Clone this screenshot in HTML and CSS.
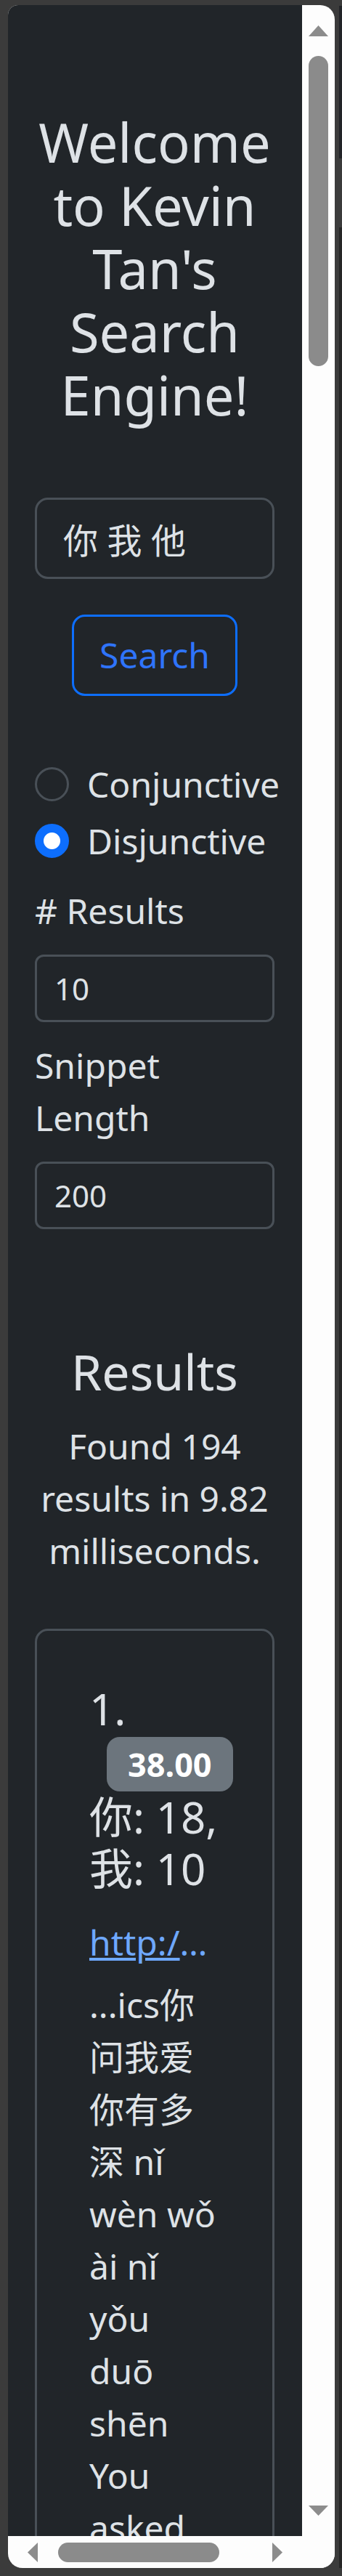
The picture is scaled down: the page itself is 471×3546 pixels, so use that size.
FILE: index.html
```html
<!DOCTYPE html>
<html lang="en">
<head>
<meta charset="utf-8">
<title>Kevin Tan's Search Engine</title>
<link rel="stylesheet" href="styles.css">
</head>
<body>
<div class="frame">
  <div class="viewport">
    <main class="container">
      <h1 class="title">Welcome to Kevin Tan's Search Engine!</h1>
      <form class="search-form">
        <input class="query" type="text" value="你 我 他">
        <button class="btn-search" type="button">Search</button>
        <div class="form-check first">
          <input class="radio" type="radio" name="mode" id="conj">
          <label for="conj">Conjunctive</label>
        </div>
        <div class="form-check">
          <input class="radio" type="radio" name="mode" id="disj" checked>
          <label for="disj">Disjunctive</label>
        </div>
        <label class="field-label first-field" for="num">#&nbsp;Results</label>
        <input class="small-input" id="num" type="text" value="10">
        <label class="field-label" for="len">Snippet Length</label>
        <input class="small-input" id="len" type="text" value="200">
      </form>
      <section class="results">
        <h2 class="results-title">Results</h2>
        <p class="found">Found 194 results in 9.82 milliseconds.</p>
        <div class="card">
          <div class="card-body">
            <h5 class="result-head">1. <span class="badge">38.00</span> 你: 18, 我: 10</h5>
            <a class="url" href="#">http://www.lyricstranslate.com/en/ni-wen-wo-ai-ni-you-duo-shen</a>
            <p class="snippet">...ics你问我爱你有多深 nǐ wèn wǒ ài nǐ yǒu duō shēn You asked me how deep my love for you is, how much I really love you</p>
          </div>
        </div>
      </section>
    </main>
  </div>
  <div class="vscroll">
    <svg class="arrow" width="27" height="15" viewBox="0 0 27 15"><path d="M13.5 0L27 15H0Z" fill="#8c8c8c"/></svg>
    <div class="vthumb"></div>
    <svg class="arrow down" width="27" height="14" viewBox="0 0 27 14"><path d="M0 0H27L13.5 14Z" fill="#8c8c8c"/></svg>
  </div>
  <div class="hscroll">
    <svg class="arrow" width="14" height="27" viewBox="0 0 14 27"><path d="M0 13.5L14 0V27Z" fill="#8c8c8c"/></svg>
    <div class="hthumb"></div>
    <svg class="arrow right" width="14" height="27" viewBox="0 0 14 27"><path d="M0 0L14 13.5L0 27Z" fill="#8c8c8c"/></svg>
  </div>
  <div class="corner"></div>
</div>
<div class="edge">
  <div class="seg-a"></div>
  <div class="seg-b"></div>
  <div class="seg-c"></div>
</div>
</body>
</html>
```

FILE: styles.css
```css
* { box-sizing: border-box; }

html, body { margin: 0; }

body {
  background: #3b3b3b;
  display: flex;
  align-items: flex-start;
  padding: 7px 0 0 11px;
  height: 3546px;
  overflow: hidden;
  font-family: "Noto Sans", "Noto Sans CJK SC", sans-serif;
}

.frame {
  width: 450px;
  height: 3528px;
  display: grid;
  grid-template-columns: 405px 45px;
  grid-template-rows: 3484px 44px;
  background: #fdfdfd;
  border-radius: 14px 20px 20px 20px;
  overflow: hidden;
  flex: none;
}

.viewport {
  background: #212529;
  color: #dee2e6;
  overflow: hidden;
  padding: 145px 38px 0 37px;
  font-size: 48px;
  line-height: 72px;
}

.title {
  margin: 0;
  font-size: 74px;
  line-height: 87px;
  font-weight: 400;
  text-align: center;
}

.search-form {
  display: flex;
  flex-direction: column;
  margin-top: 98px;
}

.query {
  width: 100%;
  height: 112px;
  padding: 0 36px;
  border: 3px solid #495057;
  border-radius: 18px;
  background: #212529;
  color: #dee2e6;
  font: 48px/72px "Noto Sans", "Noto Sans CJK SC", sans-serif;
  outline: none;
}

.btn-search {
  align-self: center;
  margin-top: 49px;
  height: 112px;
  padding: 0 35px;
  border: 3px solid #0d6efd;
  border-radius: 18px;
  background: transparent;
  color: #2f74fb;
  font: 48px/72px "Noto Sans", sans-serif;
}

.form-check {
  display: flex;
  align-items: flex-start;
  height: 72px;
  margin-bottom: 6px;
}

.form-check.first { margin-top: 86px; }

.radio {
  appearance: none;
  -webkit-appearance: none;
  flex: none;
  width: 47px;
  height: 47px;
  margin: 12px 25px 0 0;
  border: 3px solid #495057;
  border-radius: 50%;
  background: #212529;
}

.radio:checked {
  border-color: #0d6efd;
  background: radial-gradient(circle, #ffffff 0 11px, #0d6efd 12px);
}

.field-label {
  display: block;
  margin: 24px 0 24px;
}

.field-label.first-field { margin-top: 18px; }

.small-input {
  width: 100%;
  height: 93px;
  padding: 0 24px;
  border: 3px solid #495057;
  border-radius: 12px;
  background: #212529;
  color: #dee2e6;
  font: 42px/63px "Noto Sans", sans-serif;
  outline: none;
}

.results-title {
  margin: 155px 0 27px;
  font-size: 68px;
  line-height: 81px;
  font-weight: 400;
  text-align: center;
}

.found {
  margin: 0;
  text-align: center;
}

.card {
  margin-top: 71px;
  border: 3px solid #495057;
  border-radius: 18px;
  height: 1400px;
}

.card-body {
  padding: 72px 72px 0;
}

.result-head {
  margin: 0 0 30px;
  font-size: 60px;
  line-height: 71px;
  font-weight: 400;
}

.badge {
  display: inline-block;
  margin-left: 24px;
  padding: 15px 29px;
  font-size: 45px;
  line-height: 45px;
  font-weight: 700;
  color: #ffffff;
  background: #6c757d;
  border-radius: 18px;
}

.url {
  display: block;
  width: 173px;
  white-space: nowrap;
  overflow: hidden;
  text-overflow: ellipsis;
  color: #6ea8fe;
  text-decoration: underline;
}

.snippet {
  margin: 14px 0 0;
}

.vscroll {
  display: flex;
  flex-direction: column;
  align-items: center;
  padding: 28px 0;
}

.arrow { display: block; flex: none; }

.vthumb {
  margin-top: 27px;
  width: 27px;
  height: 427px;
  border-radius: 13.5px;
  background: #8b8b8b;
}

.arrow.down { margin-top: auto; }

.hscroll {
  display: flex;
  align-items: center;
  padding-left: 27px;
}

.hthumb {
  margin-left: 28px;
  width: 222px;
  height: 27px;
  border-radius: 13.5px;
  background: #8b8b8b;
}

.arrow.right { margin-left: 73px; }

.corner { background: #fdfdfd; }

.edge {
  flex: none;
  width: 4px;
  height: 3527px;
  margin: 1px 0 0 6px;
  display: flex;
  flex-direction: column;
}

.seg-a { height: 210px; background: #222428; }
.seg-b { height: 95px; background: #3b3b3b; }
.seg-c { flex: 1; background: #262626; }
```
